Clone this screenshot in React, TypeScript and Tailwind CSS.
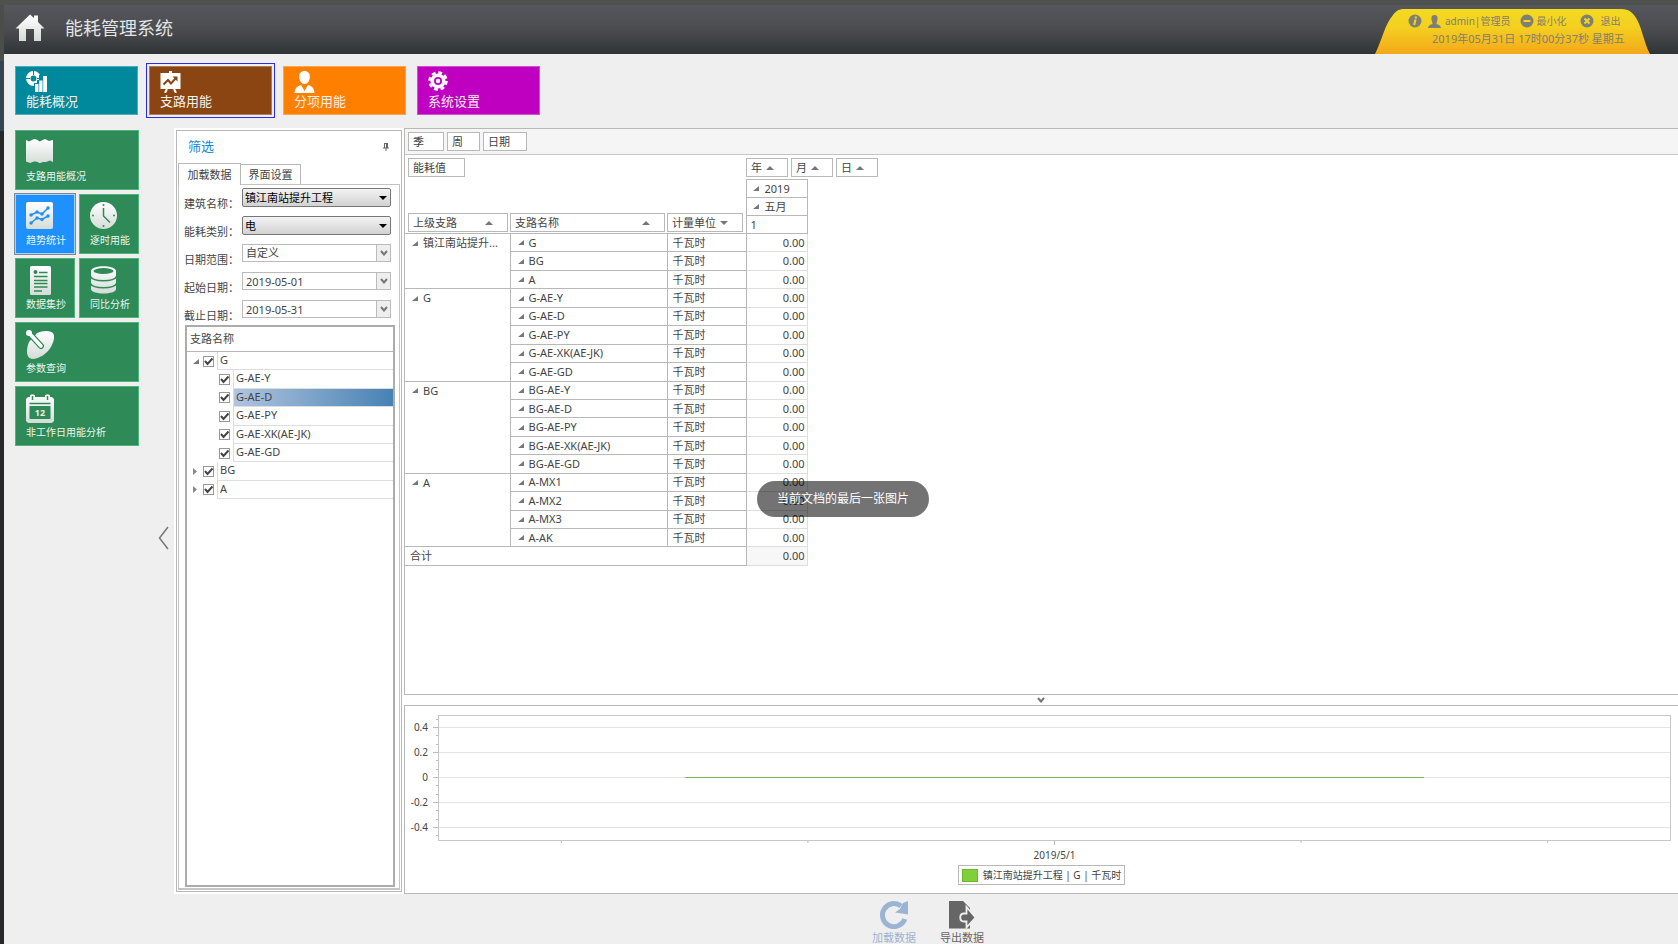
import { useState, type ReactNode } from "react";

type IconProps = { className?: string };

/* ---------- icons ---------- */

const TileGradient = ({ id }: { id: string }) => (
  <defs>
    <linearGradient id={id} x1="0" y1="0" x2="0" y2="1">
      <stop offset="0" stopColor="#ffffff" />
      <stop offset="1" stopColor="#d4dcd7" />
    </linearGradient>
  </defs>
);

const HomeIcon = () => (
  <svg viewBox="0 0 30 27" className="w-[30px] h-[27px]">
    <TileGradient id="home" />
    <path
      fill="url(#home)"
      d="M15 .5 19 4V1.5h4V8l6.5 6.5H26V27h-7V15h-8v12H4V14.500H.5Z"
    />
  </svg>
);

const OverviewIcon = () => (
  <svg viewBox="0 0 21 21" className="w-[21px] h-[21px]" fill="none">
    <circle cx="7.500" cy="7.500" r="5.200" stroke="#fff" strokeWidth="4.500" />
    <path d="M7.500 0v4M0 7.500h4M11 7.500h4" stroke="#00899c" strokeWidth="1" />
    <path d="M8 12h3V9h2V4h8v17H8Z" fill="#00899c" />
    <path fill="#fff" d="M9 13h3.500v8H9zM13.200 9.500h3.300V21h-3.300zM17.200 5h3.800v16h-3.800z" />
  </svg>
);

const BoardIcon = () => (
  <svg viewBox="0 0 21 22" className="w-[21px] h-[22px]" fill="none">
    <path fill="#fff" d="M9 0h3v2h8.500v16H.5V2H9Z" />
    <path d="M3.500 13.500 8 9l3 3.500L16 7" stroke="#8b4512" strokeWidth="2" />
    <path d="M12.500 5.500H17.500V10.500Z" fill="#8b4512" />
    <path d="m7 18-2 4M14 18l2 4" stroke="#fff" strokeWidth="2" />
  </svg>
);

const PersonIcon = () => (
  <svg viewBox="0 0 21 22" className="w-[21px] h-[22px]">
    <path
      fill="#fff"
      d="M10.500 0C14 0 16 2.500 15.800 6c-.2 4-2.300 7-5.300 7S5.400 10 5.200 6C5 2.500 7 0 10.500 0ZM7 14l3.500 6L14 14c4 1 6 3 6.500 8H.5C1 17 3 15 7 14Z"
    />
  </svg>
);

const GearIcon = () => (
  <svg viewBox="0 0 20 20" className="w-5 h-5" fill="none" stroke="#fff">
    <circle cx="10" cy="10" r="5.800" strokeWidth="3.600" />
    <circle cx="10" cy="10" r="8.500" strokeWidth="2.500" strokeDasharray="3.900 2.776" />
    <circle cx="10" cy="10" r="1.200" strokeWidth="2" />
  </svg>
);

const MapIcon = () => (
  <svg viewBox="0 0 27 25" className="w-[27px] h-[25px]">
    <TileGradient id="map" />
    <path
      fill="url(#map)"
      d="M0 2 3 3.500 8 1c2 0 4 1 5.500 2.500L19 1l4 2 4-1v22l-3-1.500-4 1.500c-2 0-4-.5-6 1.500-2-2-4-2-6-2L4 25l-4-1.500Z"
    />
  </svg>
);

const TrendIcon = () => (
  <svg viewBox="0 0 27 27" className="w-[27px] h-[27px]">
    <TileGradient id="trend" />
    <rect width="27" height="27" rx="2" fill="url(#trend)" />
    <g fill="none" stroke="#1e90ff" strokeWidth="1.500">
      <path d="m5 13 6-3 5 2 6-6M5 21l6-5 5 1.500 6-3.500" />
    </g>
    <g fill="#1e90ff">
      <circle cx="5" cy="13" r="1.700" />
      <circle cx="11" cy="10" r="1.700" />
      <circle cx="16" cy="12" r="1.700" />
      <circle cx="22" cy="6" r="1.700" />
      <circle cx="5" cy="21" r="1.700" />
      <circle cx="11" cy="16" r="1.700" />
      <circle cx="16" cy="17.500" r="1.700" />
      <circle cx="22" cy="14" r="1.700" />
    </g>
  </svg>
);

const ClockIcon = () => (
  <svg viewBox="0 0 27 27" className="w-[27px] h-[27px]">
    <TileGradient id="clock" />
    <circle cx="13.500" cy="13.500" r="13.500" fill="url(#clock)" />
    <path d="M13.500 6v8l6.500 6.500" fill="none" stroke="#2e8b57" strokeWidth="1.500" />
    <g fill="#2e8b57">
      <circle cx="13.500" cy="3" r="1" />
      <circle cx="24" cy="13.500" r="1" />
      <circle cx="13.500" cy="24" r="1" />
      <circle cx="3" cy="13.500" r="1" />
    </g>
  </svg>
);

const SheetIcon = () => (
  <svg viewBox="0 0 27 29" className="w-[27px] h-[29px]">
    <TileGradient id="sheet" />
    <rect x="4" width="21" height="29" rx="1.500" fill="url(#sheet)" />
    <circle cx="9.500" cy="6" r="2" fill="#2e8b57" />
    <path
      d="M13 6.500h8.500M8 10.500h13.500M8 14.500h13.500M8 17.500h13.500M8 21h13.500M8 25h8"
      stroke="#2e8b57"
      strokeWidth="1.500"
    />
  </svg>
);

const DatabaseIcon = () => (
  <svg viewBox="0 0 27 28" className="w-[27px] h-[28px]">
    <TileGradient id="db" />
    <path
      fill="url(#db)"
      d="M1 5c0-6.500 25-6.500 25 0v18c0 6-25 6-25 0Z"
    />
    <g fill="none" stroke="#2e8b57" strokeWidth="1.500">
      <path d="M.5 10.500c2 5.500 24 5.500 26 0M.5 17.500c2 5.500 24 5.500 26 0" />
    </g>
    <ellipse cx="13.500" cy="5" rx="10" ry="3" fill="#2e8b57" />
  </svg>
);

const DishIcon = () => (
  <svg viewBox="0 0 28 29" className="w-[28px] h-[29px]">
    <TileGradient id="dish" />
    <path
      fill="url(#dish)"
      d="M11 3C17 .5 25 0 27.500 4c2 4-1 12-5.500 17-5 5.500-14 10-18.500 7C-.5 25 1 17 3 12Z"
    />
    <path d="M3 3 15 16" stroke="#2e8b57" strokeWidth="6" strokeLinecap="round" />
    <path d="M3 3 15 16" stroke="#fff" strokeWidth="3.500" strokeLinecap="round" />
    <circle cx="3" cy="3" r="3" fill="#fff" />
  </svg>
);

const CalendarIcon = () => (
  <svg viewBox="0 0 28 29" className="w-[28px] h-[29px]">
    <TileGradient id="cal" />
    <path
      fill="url(#cal)"
      d="M2 3h2V1.500C4 0 9 0 9 1.500V3h10V1.500C19 0 24 0 24 1.500V3h2l2 2v22l-2 2H2l-2-2V5Z"
    />
    <path d="M6.500 2v4M21.500 2v4M3.500 9.500h21" stroke="#2e8b57" strokeWidth="1.500" />
    <path fill="#2e8b57" d="M3.500 12h21v13h-21z" />
    <text x="14" y="22" textAnchor="middle" fontSize="9" fontWeight="700" fill="#e8eeea">
      12
    </text>
  </svg>
);

const ReloadIcon = () => (
  <svg viewBox="0 0 28 28" className="w-7 h-7">
    <path
      d="M24.800 18A11.500 11.500 0 1 1 21 5"
      fill="none"
      stroke="#9ab4d3"
      strokeWidth="5"
    />
    <path d="M28 0v13.500l-13-2L20 8l3-6Z" fill="#9ab4d3" />
  </svg>
);

const ExportIcon = () => (
  <svg viewBox="0 0 28 28" className="w-7 h-7">
    <path d="M1 0h14l7 7v20.500H1Z" fill="#666" />
    <path
      d="M16 12.500h2.500V6l9 10.500-9 10V20.500H16c-5 0-5-8 0-8Z"
      fill="#666"
      stroke="#efefef"
      strokeWidth="1.800"
    />
  </svg>
);

const CornerMark = ({ className = "" }: IconProps) => (
  <svg viewBox="0 0 6 5" className={`w-1.5 h-[5px] shrink-0 ${className}`}>
    <path d="M6 0v5H0Z" fill="#777" />
  </svg>
);

const SortMark = ({ down, className = "" }: IconProps & { down?: boolean }) => (
  <svg viewBox="0 0 8 4" className={`w-2 h-1 shrink-0 ${className}`}>
    <path d={down ? "M0 0h8L4 4Z" : "M0 4h8L4 0Z"} fill="#777" />
  </svg>
);

const ChevronMark = ({ className = "" }: IconProps) => (
  <svg viewBox="0 0 8 6" className={`w-2 h-1.5 ${className}`}>
    <path d="m1 1 3 3.500L7 1" fill="none" stroke="#777" strokeWidth="2" />
  </svg>
);

/* ---------- data ---------- */

const modules = [
  { label: "能耗概况", color: "bg-[#00899c]", icon: <OverviewIcon /> },
  { label: "支路用能", color: "bg-[#8b4512]", icon: <BoardIcon /> },
  { label: "分项用能", color: "bg-[#ff8000]", icon: <PersonIcon /> },
  { label: "系统设置", color: "bg-[#c000c0]", icon: <GearIcon /> },
];

const sideItems = [
  { label: "支路用能概况", wide: true, icon: <MapIcon /> },
  { label: "趋势统计", wide: false, icon: <TrendIcon /> },
  { label: "逐时用能", wide: false, icon: <ClockIcon /> },
  { label: "数据集抄", wide: false, icon: <SheetIcon /> },
  { label: "同比分析", wide: false, icon: <DatabaseIcon /> },
  { label: "参数查询", wide: true, icon: <DishIcon /> },
  { label: "非工作日用能分析", wide: true, icon: <CalendarIcon /> },
];

const treeRows = [
  { label: "G", level: 0, open: true },
  { label: "G-AE-Y", level: 1 },
  { label: "G-AE-D", level: 1 },
  { label: "G-AE-PY", level: 1 },
  { label: "G-AE-XK(AE-JK)", level: 1 },
  { label: "G-AE-GD", level: 1 },
  { label: "BG", level: 0 },
  { label: "A", level: 0 },
];

const pivotGroups = [
  { parent: "镇江南站提升...", rows: ["G", "BG", "A"] },
  { parent: "G", rows: ["G-AE-Y", "G-AE-D", "G-AE-PY", "G-AE-XK(AE-JK)", "G-AE-GD"] },
  { parent: "BG", rows: ["BG-AE-Y", "BG-AE-D", "BG-AE-PY", "BG-AE-XK(AE-JK)", "BG-AE-GD"] },
  { parent: "A", rows: ["A-MX1", "A-MX2", "A-MX3", "A-AK"] },
];

const yTicks = [
  { label: "0.4", y: 12 },
  { label: "0.2", y: 37 },
  { label: "0", y: 62 },
  { label: "-0.2", y: 87 },
  { label: "-0.4", y: 112 },
];

const minorTicks = [4, 20, 29, 45, 54, 70, 79, 95, 104, 120];

/* ---------- header ---------- */

function Header() {
  return (
    <header className="flex items-start justify-between h-[49px] bg-linear-to-b from-[#56575c] via-[#4b4c50] to-[#303436]">
      <div className="flex items-center pl-[11px] pt-[7px]">
        <HomeIcon />
        <h1 className="ml-5 pt-0.5 text-lg leading-7 text-[#e4e4e4]">能耗管理系统</h1>
      </div>
      <div className="relative w-[280px] h-[49px] mr-[25px]">
        <svg viewBox="0 0 280 49" className="absolute inset-0 w-full h-full">
          <defs>
            <linearGradient id="badge" x1="0" y1="0" x2="0" y2="1">
              <stop offset="0" stopColor="#f3da20" />
              <stop offset="0.400" stopColor="#f4d020" />
              <stop offset="1" stopColor="#f3a81a" />
            </linearGradient>
          </defs>
          <path d="M262 12c8 14 8 30 18 37h-20Z" fill="#2b2d2f" />
          <path
            d="M2 49c7-14 10-30 18-39 3-4 6-6 11-6h218c5 0 9 2 12 6 8 10 9 26 16 39Z"
            fill="url(#badge)"
          />
        </svg>
        <div className="relative pl-[35px] pt-2 leading-4 text-[#83806c]">
          <div className="flex items-center text-[10px]">
            <svg viewBox="0 0 14 14" className="w-3.5 h-3.5 mr-1.5">
              <circle cx="7" cy="7" r="6.500" fill="#7f8073" />
              <path d="M7.800 2.500v2M7.500 5.500 6.200 11" stroke="#f3d71f" strokeWidth="2" />
            </svg>
            <svg viewBox="0 0 13 13" className="w-[13px] h-[13px] mr-1">
              <path
                fill="#7f8073"
                d="M6.500 0C9 0 10 2 9.500 4.500c-.2 2-1 2.500-1 4.500 2 .8 4 1 4.500 4H0c.5-3 2.500-3.200 4.500-4 0-2-.8-2.500-1-4.500C3 2 4 0 6.500 0Z"
              />
            </svg>
            <span>admin|管理员</span>
            <button className="flex items-center ml-2.5">
              <svg viewBox="0 0 14 14" className="w-3.5 h-3.5 mr-0.5">
                <circle cx="7" cy="7" r="6.500" fill="#7f8073" />
                <path d="M3.500 7h7" stroke="#f3d71f" strokeWidth="2" />
              </svg>
              最小化
            </button>
            <button className="flex items-center ml-3.5">
              <svg viewBox="0 0 14 14" className="w-3.5 h-3.5 mr-1.5">
                <circle cx="7" cy="7" r="6.500" fill="#7f8073" />
                <path d="m4.500 4.500 5 5m0-5-5 5" stroke="#f3d71f" strokeWidth="2" />
              </svg>
              退出
            </button>
          </div>
          <p className="pl-6 pt-0.5 text-[11px]">2019年05月31日 17时00分37秒 星期五</p>
        </div>
      </div>
    </header>
  );
}

/* ---------- navigation ---------- */

function ModuleNav() {
  return (
    <nav className="flex gap-[11px] pl-[11px] pt-3 pb-[13px]">
      {modules.map((m, i) => (
        <button
          key={m.label}
          className={`flex flex-col items-start w-[123px] h-[49px] pl-2.5 pt-1 border border-white/30 text-[13px] leading-4 text-[#f4f0ea] ${m.color} ${
            i === 1 ? "outline outline-offset-2 outline-[#2b2bee]" : ""
          }`}
        >
          <span className="h-[22px]">{m.icon}</span>
          {m.label}
        </button>
      ))}
    </nav>
  );
}

function SideNav() {
  return (
    <nav className="grid grid-cols-2 gap-1 w-[124px] content-start">
      {sideItems.map(item => (
        <button
          key={item.label}
          className={`flex flex-col items-start h-[60px] pl-2.5 pt-[7px] border text-[10px] leading-3 text-[#eaf5ee] ${
            item.wide ? "col-span-2" : ""
          } ${
            item.label === "趋势统计"
              ? "bg-[#1e90ff] border-[#a8d0f8] outline outline-[#808890]"
              : "bg-[#2e8b57] border-[#4fb37c]"
          }`}
        >
          <span className="h-8">{item.icon}</span>
          {item.label}
        </button>
      ))}
    </nav>
  );
}

/* ---------- filter panel ---------- */

function Field({ id, label, children }: { id: string; label: string; children: ReactNode }) {
  return (
    <div className="flex h-7">
      <label htmlFor={id} className="w-[58px] pt-2 leading-4 whitespace-nowrap">
        {label}：
      </label>
      <div className="relative w-[149px] h-[19px]">{children}</div>
    </div>
  );
}

const classicSelect =
  "appearance-none w-full h-[19px] px-0.5 rounded-xs border border-[#777] bg-linear-to-b from-[#f3f3f3] to-[#d2d2d2] text-[11px] leading-4 text-black";
const flatInput =
  "appearance-none w-full h-[18px] px-[3px] border border-[#bbb] bg-white text-[11px] leading-4 text-[#444]";

const DropButton = () => (
  <span className="absolute right-0 top-0 flex items-center justify-center w-[15px] h-[18px] border border-[#bbb] bg-[#eee] pointer-events-none">
    <ChevronMark />
  </span>
);

function BranchTree() {
  const [selected, setSelected] = useState("G-AE-D");

  return (
    <div className="flex-1 ml-1.5 mr-1 mb-px border-2 border-[#acacac] bg-white">
      <div className="h-[25px] pl-[3px] pt-1 leading-4 border-b border-[#b5b5b5]">支路名称</div>
      <div className="flex flex-col h-[147px]">
        {treeRows.map(row => (
          <div key={row.label} className="flex flex-1 items-stretch">
            <span className={`flex items-center pl-1.5 ${row.level ? "w-8" : "w-4"}`}>
              {row.level === 0 &&
                (row.open ? (
                  <CornerMark />
                ) : (
                  <svg viewBox="0 0 4 7" className="w-1 h-[7px]">
                    <path d="M0 0v7l4-3.500Z" fill="#888" />
                  </svg>
                ))}
            </span>
            <span className="relative flex items-center w-3.5">
              <input
                id={`branch-${row.label}`}
                type="checkbox"
                defaultChecked
                className="peer appearance-none w-[11px] h-[11px] border border-[#999] bg-white"
              />
              <svg
                viewBox="0 0 11 11"
                className="absolute left-0 w-[11px] h-[11px] pointer-events-none invisible peer-checked:visible"
              >
                <path d="m2 5 2.500 3L9.500 2.500" fill="none" stroke="#444" strokeWidth="2" />
              </svg>
            </span>
            <label
              htmlFor={`branch-${row.label}`}
              onMouseDown={() => setSelected(row.label)}
              className={`flex-1 pl-0.5 leading-4 border-l border-b border-[#ddd] ${
                selected === row.label ? "bg-linear-to-r from-[#b0c4de] to-[#4682b4]" : ""
              }`}
            >
              {row.label}
            </label>
          </div>
        ))}
      </div>
    </div>
  );
}

function FilterPanel() {
  return (
    <aside className="w-[230px] p-0.5 bg-white flex">
      <div className="flex-1 flex flex-col border border-[#b8b8b8]">
        <div className="flex items-center justify-between h-8 pl-[11px] pr-3">
          <h2 className="text-[13px] text-[#1883d7]">筛选</h2>
          <button aria-label="固定">
            <svg viewBox="0 0 6 8" className="w-1.5 h-2">
              <path d="M1.500 0v5M0 5h6M3 5v3M2 .5h2" stroke="#666" fill="none" />
              <path d="M3 0h2v5H3z" fill="#666" />
            </svg>
          </button>
        </div>
        <div className="flex items-end pl-px">
          <button className="relative z-10 w-[63px] h-[22px] pt-0.5 -mb-px border border-b-0 border-[#b8b8b8] bg-white">
            加载数据
          </button>
          <button className="w-[61px] h-5 pt-0.5 -ml-px border border-b-0 border-[#b8b8b8] bg-white">
            界面设置
          </button>
        </div>
        <div className="flex-1 flex flex-col mx-px mb-px pt-[3px] border border-b-2 border-[#c4c4c4]">
          <div className="h-[137px] pl-[5px]">
            <Field id="building" label="建筑名称">
              <select id="building" className={classicSelect}>
                <option>镇江南站提升工程</option>
              </select>
              <SortMark down className="absolute right-1 top-2 brightness-0 pointer-events-none" />
            </Field>
            <Field id="energy" label="能耗类别">
              <select id="energy" className={classicSelect}>
                <option>电</option>
              </select>
              <SortMark down className="absolute right-1 top-2 brightness-0 pointer-events-none" />
            </Field>
            <Field id="range" label="日期范围">
              <select id="range" className={flatInput}>
                <option>自定义</option>
              </select>
              <DropButton />
            </Field>
            <Field id="from" label="起始日期">
              <input id="from" defaultValue="2019-05-01" className={flatInput} />
              <DropButton />
            </Field>
            <Field id="to" label="截止日期">
              <input id="to" defaultValue="2019-05-31" className={flatInput} />
              <DropButton />
            </Field>
          </div>
          <BranchTree />
        </div>
      </div>
    </aside>
  );
}

/* ---------- pivot grid ---------- */

const fieldButton =
  "flex items-center h-[19px] px-1 border border-[#b8b8b8] bg-white leading-4 whitespace-nowrap";

function PivotGrid() {
  return (
    <section className="border-l border-t border-b border-[#b8b8b8] bg-white h-[567px]">
      <div className="flex gap-[3px] h-[26px] pl-[3px] pt-[3px] bg-[#f5f5f5] border-b border-[#c4c4c4]">
        <button className={`${fieldButton} w-9`}>季</button>
        <button className={`${fieldButton} w-[33px]`}>周</button>
        <button className={`${fieldButton} w-11`}>日期</button>
      </div>
      <div className="flex pl-[3px] pt-[3px] pb-0.5">
        <button className={`${fieldButton} w-[57px]`}>能耗值</button>
        <div className="flex gap-[3px] ml-[281px]">
          {["年", "月", "日"].map(name => (
            <button key={name} className={`${fieldButton} gap-1 w-[42px]`}>
              {name}
              <SortMark />
            </button>
          ))}
        </div>
      </div>
      <table className="table-fixed border-collapse w-[402px] h-[387px] leading-4 text-left">
        <colgroup>
          <col className="w-[105px]" />
          <col className="w-[157px]" />
          <col className="w-[79px]" />
          <col className="w-[61px]" />
        </colgroup>
        <thead className="[&_th]:font-normal [&_th]:p-0">
          <tr className="h-[18px]">
            <th rowSpan={3} className="align-bottom">
              <button className={`${fieldButton} w-[100px] ml-[3px] mb-px justify-between`}>
                上级支路
                <SortMark className="mr-2.5" />
              </button>
            </th>
            <th rowSpan={3} className="align-bottom">
              <button className={`${fieldButton} w-[155px] mb-px justify-between`}>
                支路名称
                <SortMark className="mr-2.5" />
              </button>
            </th>
            <th rowSpan={3} className="align-bottom">
              <button className={`${fieldButton} w-[76px] mb-px justify-between`}>
                计量单位
                <SortMark down className="mr-2.5" />
              </button>
            </th>
            <th className="border border-[#b8b8b8]">
              <span className="flex items-center gap-1.5 pl-1.5">
                <CornerMark />
                2019
              </span>
            </th>
          </tr>
          <tr className="h-[18px]">
            <th className="border border-[#b8b8b8]">
              <span className="flex items-center gap-1.5 pl-1.5">
                <CornerMark />
                五月
              </span>
            </th>
          </tr>
          <tr className="h-[18px]">
            <th className="border border-[#b8b8b8]">
              <span className="pl-1">1</span>
            </th>
          </tr>
        </thead>
        <tbody className="[&_td]:p-0">
          {pivotGroups.map(group =>
            group.rows.map((name, i) => (
              <tr key={name} className="h-[18px]">
                {i === 0 && (
                  <td
                    rowSpan={group.rows.length}
                    className="align-top border border-l-0 border-[#b8b8b8]"
                  >
                    <span className="flex items-center gap-[5px] pl-[7px] pt-px whitespace-nowrap">
                      <CornerMark />
                      {group.parent}
                    </span>
                  </td>
                )}
                <td className="border border-[#b8b8b8]">
                  <span className="flex items-center gap-[5px] pl-[7px]">
                    <CornerMark />
                    {name}
                  </span>
                </td>
                <td className="border border-[#b8b8b8]">
                  <span className="pl-[5px]">千瓦时</span>
                </td>
                <td className="border border-[#dedede] border-l-[#b8b8b8] text-right">
                  <span className="pr-0.5">0.00</span>
                </td>
              </tr>
            ))
          )}
          <tr className="h-[18px]">
            <td colSpan={3} className="border border-l-0 border-[#b8b8b8]">
              <span className="pl-[5px]">合计</span>
            </td>
            <td className="border border-[#dedede] bg-[#f7f7f7] text-right">
              <span className="pr-0.5">0.00</span>
            </td>
          </tr>
        </tbody>
      </table>
    </section>
  );
}

/* ---------- chart ---------- */

function TrendChart() {
  return (
    <section className="flex-1 flex flex-col border border-r-0 border-[#b8b8b8] bg-white pt-[9px] text-[10px] text-[#444]">
      <div className="flex pr-[7px]">
        <svg className="w-[33px] h-[126px] shrink-0 overflow-visible">
          {yTicks.map(t => (
            <g key={t.label}>
              <text x="23" y={t.y + 4} textAnchor="end" fill="#444">
                {t.label}
              </text>
              <path d={`M28 ${t.y}.5h5`} stroke="#bbb" />
            </g>
          ))}
          {minorTicks.map(y => (
            <path key={y} d={`M31 ${y}.5h2`} stroke="#bbb" />
          ))}
        </svg>
        <svg className="flex-1 h-[126px] border border-[#c8c8c8]">
          {yTicks.map(t => (
            <line key={t.label} x1="0" x2="100%" y1={t.y - 0.5} y2={t.y - 0.5} stroke="#e4e4e4" />
          ))}
          <line x1="20%" x2="80%" y1="61.500" y2="61.500" stroke="#7fb552" />
        </svg>
      </div>
      <div className="pl-[33px] pr-[7px] flex flex-col items-center">
        <svg className="w-full h-1">
          {["10%", "30%", "70%", "90%"].map(x => (
            <line key={x} x1={x} x2={x} y1="0" y2="2" stroke="#bbb" />
          ))}
          <line x1="50%" x2="50%" y1="0" y2="4" stroke="#bbb" />
        </svg>
        <span className="pt-0.5 leading-4">2019/5/1</span>
      </div>
      <div className="flex justify-center pt-0.5">
        <div className="flex items-center h-5 px-[3px] border border-[#b8b8b8] leading-4">
          <span className="w-4 h-[13px] mr-[5px] bg-[#80d03a] border border-[#6cb52c]" />
          镇江南站提升工程 | G | 千瓦时
        </div>
      </div>
    </section>
  );
}

/* ---------- page ---------- */

export default function App() {
  return (
    <div className="relative flex flex-col min-h-screen bg-[#efefef] text-[11px] text-[#444] font-['Noto_Sans','Noto_Sans_CJK_SC',sans-serif]">
      <div className="h-[5px] bg-[#4f514e]" />
      <div className="flex flex-1">
        <div className="flex flex-col w-1 bg-[#28282a]">
          <div className="h-[56px] bg-[#4b4d4a]" />
          <div className="h-[70px] bg-[#334650]" />
        </div>
        <div className="flex-1 min-w-0 flex flex-col">
          <Header />
          <ModuleNav />
          <div className="flex flex-1">
            <div className="pl-[11px] pt-0.5">
              <SideNav />
            </div>
            <div className="flex items-center w-[35px] pl-[19px] pt-[54px]">
              <button aria-label="收起">
                <svg viewBox="0 0 11 24" className="w-[11px] h-6">
                  <path d="M10 1 1.500 12 10 23" fill="none" stroke="#777" strokeWidth="1.500" />
                </svg>
              </button>
            </div>
            <FilterPanel />
            <div className="flex-1 min-w-0 flex flex-col bg-white">
              <PivotGrid />
              <button aria-label="折叠" className="flex items-center justify-center h-2.5">
                <ChevronMark />
              </button>
              <TrendChart />
            </div>
          </div>
          <footer className="flex justify-center gap-6 h-[50px] pt-[7px] pl-[174px] leading-3">
            <button className="flex flex-col items-center gap-[3px] text-[#9ab4d3]">
              <ReloadIcon />
              加载数据
            </button>
            <button className="flex flex-col items-center gap-[3px] text-[#666]">
              <ExportIcon />
              导出数据
            </button>
          </footer>
        </div>
      </div>
      <div
        role="status"
        className="absolute left-1/2 top-[481px] -translate-x-1/2 ml-1 h-9 px-5 rounded-full bg-black/55 text-xs leading-9 text-white whitespace-nowrap"
      >
        当前文档的最后一张图片
      </div>
    </div>
  );
}
